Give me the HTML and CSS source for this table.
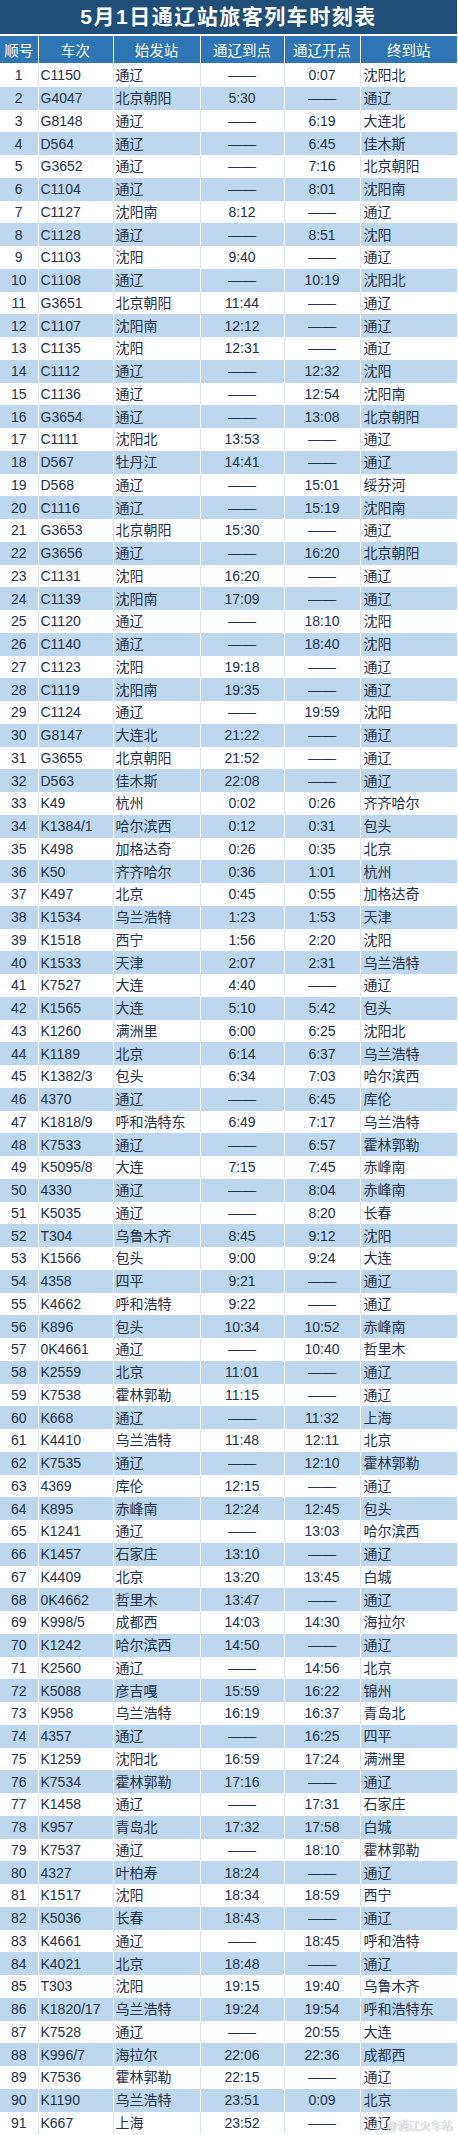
FILE: index.html
```html
<!DOCTYPE html>
<html lang="zh-CN">
<head>
<meta charset="utf-8">
<title>5月1日通辽站旅客列车时刻表</title>
<link rel="stylesheet" href="styles.css">
</head>
<body>
<div class="sheet">
  <div class="title">5月1日通辽站旅客列车时刻表</div>
  <table class="tt">
    <colgroup>
      <col class="c-no"><col class="c-train"><col class="c-from"><col class="c-arr"><col class="c-dep"><col class="c-to">
    </colgroup>
    <thead>
      <tr><th>顺号</th><th>车次</th><th>始发站</th><th>通辽到点</th><th>通辽开点</th><th>终到站</th></tr>
    </thead>
    <tbody>
      <tr><td>1</td><td>C1150</td><td>通辽</td><td>——</td><td>0:07</td><td>沈阳北</td></tr>
      <tr><td>2</td><td>G4047</td><td>北京朝阳</td><td>5:30</td><td>——</td><td>通辽</td></tr>
      <tr><td>3</td><td>G8148</td><td>通辽</td><td>——</td><td>6:19</td><td>大连北</td></tr>
      <tr><td>4</td><td>D564</td><td>通辽</td><td>——</td><td>6:45</td><td>佳木斯</td></tr>
      <tr><td>5</td><td>G3652</td><td>通辽</td><td>——</td><td>7:16</td><td>北京朝阳</td></tr>
      <tr><td>6</td><td>C1104</td><td>通辽</td><td>——</td><td>8:01</td><td>沈阳南</td></tr>
      <tr><td>7</td><td>C1127</td><td>沈阳南</td><td>8:12</td><td>——</td><td>通辽</td></tr>
      <tr><td>8</td><td>C1128</td><td>通辽</td><td>——</td><td>8:51</td><td>沈阳</td></tr>
      <tr><td>9</td><td>C1103</td><td>沈阳</td><td>9:40</td><td>——</td><td>通辽</td></tr>
      <tr><td>10</td><td>C1108</td><td>通辽</td><td>——</td><td>10:19</td><td>沈阳北</td></tr>
      <tr><td>11</td><td>G3651</td><td>北京朝阳</td><td>11:44</td><td>——</td><td>通辽</td></tr>
      <tr><td>12</td><td>C1107</td><td>沈阳南</td><td>12:12</td><td>——</td><td>通辽</td></tr>
      <tr><td>13</td><td>C1135</td><td>沈阳</td><td>12:31</td><td>——</td><td>通辽</td></tr>
      <tr><td>14</td><td>C1112</td><td>通辽</td><td>——</td><td>12:32</td><td>沈阳</td></tr>
      <tr><td>15</td><td>C1136</td><td>通辽</td><td>——</td><td>12:54</td><td>沈阳南</td></tr>
      <tr><td>16</td><td>G3654</td><td>通辽</td><td>——</td><td>13:08</td><td>北京朝阳</td></tr>
      <tr><td>17</td><td>C1111</td><td>沈阳北</td><td>13:53</td><td>——</td><td>通辽</td></tr>
      <tr><td>18</td><td>D567</td><td>牡丹江</td><td>14:41</td><td>——</td><td>通辽</td></tr>
      <tr><td>19</td><td>D568</td><td>通辽</td><td>——</td><td>15:01</td><td>绥芬河</td></tr>
      <tr><td>20</td><td>C1116</td><td>通辽</td><td>——</td><td>15:19</td><td>沈阳南</td></tr>
      <tr><td>21</td><td>G3653</td><td>北京朝阳</td><td>15:30</td><td>——</td><td>通辽</td></tr>
      <tr><td>22</td><td>G3656</td><td>通辽</td><td>——</td><td>16:20</td><td>北京朝阳</td></tr>
      <tr><td>23</td><td>C1131</td><td>沈阳</td><td>16:20</td><td>——</td><td>通辽</td></tr>
      <tr><td>24</td><td>C1139</td><td>沈阳南</td><td>17:09</td><td>——</td><td>通辽</td></tr>
      <tr><td>25</td><td>C1120</td><td>通辽</td><td>——</td><td>18:10</td><td>沈阳</td></tr>
      <tr><td>26</td><td>C1140</td><td>通辽</td><td>——</td><td>18:40</td><td>沈阳</td></tr>
      <tr><td>27</td><td>C1123</td><td>沈阳</td><td>19:18</td><td>——</td><td>通辽</td></tr>
      <tr><td>28</td><td>C1119</td><td>沈阳南</td><td>19:35</td><td>——</td><td>通辽</td></tr>
      <tr><td>29</td><td>C1124</td><td>通辽</td><td>——</td><td>19:59</td><td>沈阳</td></tr>
      <tr><td>30</td><td>G8147</td><td>大连北</td><td>21:22</td><td>——</td><td>通辽</td></tr>
      <tr><td>31</td><td>G3655</td><td>北京朝阳</td><td>21:52</td><td>——</td><td>通辽</td></tr>
      <tr><td>32</td><td>D563</td><td>佳木斯</td><td>22:08</td><td>——</td><td>通辽</td></tr>
      <tr><td>33</td><td>K49</td><td>杭州</td><td>0:02</td><td>0:26</td><td>齐齐哈尔</td></tr>
      <tr><td>34</td><td>K1384/1</td><td>哈尔滨西</td><td>0:12</td><td>0:31</td><td>包头</td></tr>
      <tr><td>35</td><td>K498</td><td>加格达奇</td><td>0:26</td><td>0:35</td><td>北京</td></tr>
      <tr><td>36</td><td>K50</td><td>齐齐哈尔</td><td>0:36</td><td>1:01</td><td>杭州</td></tr>
      <tr><td>37</td><td>K497</td><td>北京</td><td>0:45</td><td>0:55</td><td>加格达奇</td></tr>
      <tr><td>38</td><td>K1534</td><td>乌兰浩特</td><td>1:23</td><td>1:53</td><td>天津</td></tr>
      <tr><td>39</td><td>K1518</td><td>西宁</td><td>1:56</td><td>2:20</td><td>沈阳</td></tr>
      <tr><td>40</td><td>K1533</td><td>天津</td><td>2:07</td><td>2:31</td><td>乌兰浩特</td></tr>
      <tr><td>41</td><td>K7527</td><td>大连</td><td>4:40</td><td>——</td><td>通辽</td></tr>
      <tr><td>42</td><td>K1565</td><td>大连</td><td>5:10</td><td>5:42</td><td>包头</td></tr>
      <tr><td>43</td><td>K1260</td><td>满洲里</td><td>6:00</td><td>6:25</td><td>沈阳北</td></tr>
      <tr><td>44</td><td>K1189</td><td>北京</td><td>6:14</td><td>6:37</td><td>乌兰浩特</td></tr>
      <tr><td>45</td><td>K1382/3</td><td>包头</td><td>6:34</td><td>7:03</td><td>哈尔滨西</td></tr>
      <tr><td>46</td><td>4370</td><td>通辽</td><td>——</td><td>6:45</td><td>库伦</td></tr>
      <tr><td>47</td><td>K1818/9</td><td>呼和浩特东</td><td>6:49</td><td>7:17</td><td>乌兰浩特</td></tr>
      <tr><td>48</td><td>K7533</td><td>通辽</td><td>——</td><td>6:57</td><td>霍林郭勒</td></tr>
      <tr><td>49</td><td>K5095/8</td><td>大连</td><td>7:15</td><td>7:45</td><td>赤峰南</td></tr>
      <tr><td>50</td><td>4330</td><td>通辽</td><td>——</td><td>8:04</td><td>赤峰南</td></tr>
      <tr><td>51</td><td>K5035</td><td>通辽</td><td>——</td><td>8:20</td><td>长春</td></tr>
      <tr><td>52</td><td>T304</td><td>乌鲁木齐</td><td>8:45</td><td>9:12</td><td>沈阳</td></tr>
      <tr><td>53</td><td>K1566</td><td>包头</td><td>9:00</td><td>9:24</td><td>大连</td></tr>
      <tr><td>54</td><td>4358</td><td>四平</td><td>9:21</td><td>——</td><td>通辽</td></tr>
      <tr><td>55</td><td>K4662</td><td>呼和浩特</td><td>9:22</td><td>——</td><td>通辽</td></tr>
      <tr><td>56</td><td>K896</td><td>包头</td><td>10:34</td><td>10:52</td><td>赤峰南</td></tr>
      <tr><td>57</td><td>0K4661</td><td>通辽</td><td>——</td><td>10:40</td><td>哲里木</td></tr>
      <tr><td>58</td><td>K2559</td><td>北京</td><td>11:01</td><td>——</td><td>通辽</td></tr>
      <tr><td>59</td><td>K7538</td><td>霍林郭勒</td><td>11:15</td><td>——</td><td>通辽</td></tr>
      <tr><td>60</td><td>K668</td><td>通辽</td><td>——</td><td>11:32</td><td>上海</td></tr>
      <tr><td>61</td><td>K4410</td><td>乌兰浩特</td><td>11:48</td><td>12:11</td><td>北京</td></tr>
      <tr><td>62</td><td>K7535</td><td>通辽</td><td>——</td><td>12:10</td><td>霍林郭勒</td></tr>
      <tr><td>63</td><td>4369</td><td>库伦</td><td>12:15</td><td>——</td><td>通辽</td></tr>
      <tr><td>64</td><td>K895</td><td>赤峰南</td><td>12:24</td><td>12:45</td><td>包头</td></tr>
      <tr><td>65</td><td>K1241</td><td>通辽</td><td>——</td><td>13:03</td><td>哈尔滨西</td></tr>
      <tr><td>66</td><td>K1457</td><td>石家庄</td><td>13:10</td><td>——</td><td>通辽</td></tr>
      <tr><td>67</td><td>K4409</td><td>北京</td><td>13:20</td><td>13:45</td><td>白城</td></tr>
      <tr><td>68</td><td>0K4662</td><td>哲里木</td><td>13:47</td><td>——</td><td>通辽</td></tr>
      <tr><td>69</td><td>K998/5</td><td>成都西</td><td>14:03</td><td>14:30</td><td>海拉尔</td></tr>
      <tr><td>70</td><td>K1242</td><td>哈尔滨西</td><td>14:50</td><td>——</td><td>通辽</td></tr>
      <tr><td>71</td><td>K2560</td><td>通辽</td><td>——</td><td>14:56</td><td>北京</td></tr>
      <tr><td>72</td><td>K5088</td><td>彦吉嘎</td><td>15:59</td><td>16:22</td><td>锦州</td></tr>
      <tr><td>73</td><td>K958</td><td>乌兰浩特</td><td>16:19</td><td>16:37</td><td>青岛北</td></tr>
      <tr><td>74</td><td>4357</td><td>通辽</td><td>——</td><td>16:25</td><td>四平</td></tr>
      <tr><td>75</td><td>K1259</td><td>沈阳北</td><td>16:59</td><td>17:24</td><td>满洲里</td></tr>
      <tr><td>76</td><td>K7534</td><td>霍林郭勒</td><td>17:16</td><td>——</td><td>通辽</td></tr>
      <tr><td>77</td><td>K1458</td><td>通辽</td><td>——</td><td>17:31</td><td>石家庄</td></tr>
      <tr><td>78</td><td>K957</td><td>青岛北</td><td>17:32</td><td>17:58</td><td>白城</td></tr>
      <tr><td>79</td><td>K7537</td><td>通辽</td><td>——</td><td>18:10</td><td>霍林郭勒</td></tr>
      <tr><td>80</td><td>4327</td><td>叶柏寿</td><td>18:24</td><td>——</td><td>通辽</td></tr>
      <tr><td>81</td><td>K1517</td><td>沈阳</td><td>18:34</td><td>18:59</td><td>西宁</td></tr>
      <tr><td>82</td><td>K5036</td><td>长春</td><td>18:43</td><td>——</td><td>通辽</td></tr>
      <tr><td>83</td><td>K4661</td><td>通辽</td><td>——</td><td>18:45</td><td>呼和浩特</td></tr>
      <tr><td>84</td><td>K4021</td><td>北京</td><td>18:48</td><td>——</td><td>通辽</td></tr>
      <tr><td>85</td><td>T303</td><td>沈阳</td><td>19:15</td><td>19:40</td><td>乌鲁木齐</td></tr>
      <tr><td>86</td><td>K1820/17</td><td>乌兰浩特</td><td>19:24</td><td>19:54</td><td>呼和浩特东</td></tr>
      <tr><td>87</td><td>K7528</td><td>通辽</td><td>——</td><td>20:55</td><td>大连</td></tr>
      <tr><td>88</td><td>K996/7</td><td>海拉尔</td><td>22:06</td><td>22:36</td><td>成都西</td></tr>
      <tr><td>89</td><td>K7536</td><td>霍林郭勒</td><td>22:15</td><td>——</td><td>通辽</td></tr>
      <tr><td>90</td><td>K1190</td><td>乌兰浩特</td><td>23:51</td><td>0:09</td><td>北京</td></tr>
      <tr><td>91</td><td>K667</td><td>上海</td><td>23:52</td><td>——</td><td>通辽</td></tr>
    </tbody>
  </table>
  <div class="watermark">
    <svg class="wb" viewBox="0 0 16 14" width="11" height="10" aria-hidden="true">
      <path d="M6.6 4.2c2-.9 3.6-.7 3.4 1 .8-.3 2.2-.5 2.4.6.2.9-.5 1.8-1 2.3-1.3 1.6-3.6 2.6-5.8 2.6C3.4 10.7 1 9.8 1 8c0-1.4 1.3-2.8 2.7-3.6l2.9-.2z" fill="none" stroke="rgba(255,255,255,0.9)" stroke-width="1.1"/>
      <ellipse cx="6" cy="7.8" rx="2.3" ry="1.6" fill="none" stroke="rgba(255,255,255,0.9)" stroke-width="0.9"/>
      <path d="M11.5 1.5c1.6.1 2.8 1.3 2.8 3" fill="none" stroke="rgba(255,255,255,0.9)" stroke-width="1"/>
    </svg>
    <span>@通辽火车站</span>
  </div>
</div>
</body>
</html>
```

FILE: styles.css
```css
html, body {
  margin: 0;
  padding: 0;
  background: #ffffff;
}

.sheet {
  position: relative;
  width: 458px;
  height: 2135px;
  overflow: hidden;
  font-family: "Liberation Sans", "Noto Sans CJK SC", sans-serif;
  color: #22324e;
}

.title {
  width: 457px;
  height: 34px;
  margin-bottom: 2px;
  background: #1f4e79;
  color: #ffffff;
  font-family: "Liberation Sans", "Noto Sans CJK SC", sans-serif;
  font-weight: bold;
  font-size: 21px;
  letter-spacing: 1.5px;
  line-height: 34px;
  text-align: center;
}

.tt {
  width: 457px;
  table-layout: fixed;
  border-collapse: collapse;
  border-spacing: 0;
}

.c-no { width: 38px; }
.c-train { width: 75px; }
.c-from { width: 87px; }
.c-arr { width: 84px; }
.c-dep { width: 76px; }
.c-to { width: 97px; }

.tt th {
  height: 27px;
  padding: 0;
  background: #2e75b6;
  color: #ffffff;
  font-weight: normal;
  font-size: 14.5px;
  text-align: center;
  border-left: 1px solid #ffffff;
  border-bottom: 1px solid #ffffff;
}

.tt th:first-child,
.tt td:first-child {
  border-left: none;
}

.tt td {
  height: 22.76px;
  padding: 0;
  font-size: 14px;
  line-height: 16px;
  white-space: nowrap;
  overflow: hidden;
  border-left: 1px solid #dfe6ef;
  vertical-align: middle;
}

.tt tbody tr:nth-child(even) td {
  background: #bdd7ee;
  border-left-color: #ffffff;
}

.tt td:nth-child(1) { text-align: center; }
.tt td:nth-child(2) { padding-left: 2px; }
.tt td:nth-child(3) { padding-left: 2px; }
.tt td:nth-child(4) { text-align: center; }
.tt td:nth-child(5) { text-align: center; }
.tt td:nth-child(6) { padding-left: 3px; }

.watermark {
  position: absolute;
  right: 5px;
  bottom: 3px;
  display: flex;
  align-items: center;
  gap: 1px;
  font-size: 11px;
  line-height: 12px;
  color: rgba(255, 255, 255, 0.88);
  text-shadow: 0 0 1px rgba(60, 70, 90, 0.7);
}

.wb {
  display: block;
}
```
